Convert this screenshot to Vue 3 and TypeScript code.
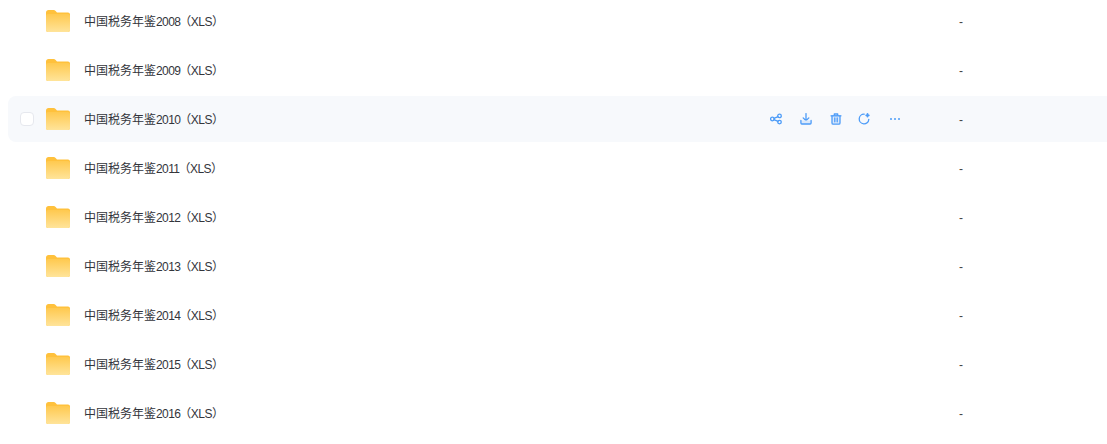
<script setup lang="ts">
const years = [2008, 2009, 2010, 2011, 2012, 2013, 2014, 2015, 2016]
const activeYear = 2010
</script>

<template>
  <div class="page">
    <div class="list">
      <div v-for="year in years" :key="year" class="row" :class="{ 'is-active': year === activeYear }">
        <span class="check"></span>
        <svg class="folder" viewBox="0 0 24 22" xmlns="http://www.w3.org/2000/svg">
          <defs>
            <linearGradient :id="`folder-${year}`" x1="0" y1="0" x2="0" y2="1">
              <stop offset="0" stop-color="#ffc94f" />
              <stop offset="1" stop-color="#ffe49a" />
            </linearGradient>
          </defs>
          <path d="M0 2.5C0 1.1 1.1 0 2.5 0H7.6C8.4 0 9.1.3 9.6.9L11 2.5H22C23.1 2.5 24 3.4 24 4.5V20C24 21.1 23.1 22 22 22H2C.9 22 0 21.1 0 20Z" fill="#ffc13c" />
          <path d="M0 6C0 4.9.9 4 2 4H22C23.1 4 24 4.9 24 6V20C24 21.1 23.1 22 22 22H2C.9 22 0 21.1 0 20Z" :fill="`url(#folder-${year})`" />
        </svg>
        <span class="name">中国税务年鉴<span class="year">{{ year }}</span><span class="tag">（XLS）</span></span>

        <div class="actions">
          <template v-if="year === activeYear">
            <svg viewBox="0 0 12 12" xmlns="http://www.w3.org/2000/svg">
              <circle cx="2.4" cy="6" r="1.8" />
              <circle cx="9.5" cy="2.9" r="1.8" />
              <circle cx="9.5" cy="9.1" r="1.8" />
              <path d="M4 5.3 8 3.6M4 6.7 8 8.4" />
            </svg>
            <svg viewBox="0 0 12 12" xmlns="http://www.w3.org/2000/svg">
              <path d="M6 .6V7.5M3.2 4.9 6 7.7 8.8 4.9" />
              <path class="soft" d="M.9 7.5V10A1 1 0 0 0 1.9 11H10.1A1 1 0 0 0 11.1 10V7.5" />
            </svg>
            <svg viewBox="0 0 12 12" xmlns="http://www.w3.org/2000/svg">
              <path d="M1 2.8H11M4.3 2.6V1H7.7V2.6" />
              <path class="soft" d="M2 2.8V10A1.2 1.2 0 0 0 3.2 11.2H8.800A1.200 1.200 0 0 0 10 10V2.800Z" />
              <path d="M4.800 5V8.800M7.200 5V8.800" />
            </svg>
            <svg class="refresh" viewBox="0 0 12 12" xmlns="http://www.w3.org/2000/svg">
              <path d="M6.200 1.200A4.800 4.800 0 1 0 10.800 6.400" />
              <path class="plus" d="M9.500 1V3.600M8.200 2.300H10.800" />
            </svg>
            <svg viewBox="0 0 12 12" xmlns="http://www.w3.org/2000/svg" class="more">
              <circle cx="2" cy="6" r="1" />
              <circle cx="6" cy="6" r="1" />
              <circle cx="10" cy="6" r="1" />
            </svg>
          </template>
        </div>

        <span class="size">-</span>
      </div>
    </div>
  </div>
</template>

<style>
html,
body {
  margin: 0;
  background: #fff;
}
</style>

<style scoped>
.page {
  height: 444px;
  overflow: hidden;
  padding-left: 8px;
  font-family: "Liberation Sans", "Noto Sans CJK SC", sans-serif;
}

.list {
  display: flex;
  flex-direction: column;
  gap: 3px;
  margin-top: -2px;
}

.row {
  display: flex;
  align-items: center;
  height: 46px;
  padding-left: 12px;
  border-radius: 8px 0 0 8px;
  color: #33353b;
  font-size: 12px;
  flex-shrink: 0;
}

.row.is-active {
  background: #f7f9fc;
}

.check {
  width: 14px;
  height: 14px;
  box-sizing: border-box;
  margin-right: 12px;
  border-radius: 4px;
}

.is-active .check {
  background: #fff;
  border: 1.5px solid #e6e8ee;
}

.folder {
  width: 24px;
  height: 22px;
  margin-right: 14px;
  flex-shrink: 0;
}

.name {
  width: 686px;
  white-space: nowrap;
  line-height: 16px;
  margin-top: 2px;
}

.year {
  letter-spacing: -0.6px;
}

.tag {
  margin-left: -1px;
  letter-spacing: -0.5px;
}

.actions {
  display: flex;
  gap: 18px;
  width: 189px;
  margin-top: -1px;
}

.actions svg {
  width: 12px;
  height: 12px;
  fill: none;
  stroke: #4d9cf8;
  stroke-width: 1.3;
  stroke-linecap: round;
  stroke-linejoin: round;
}

.actions .soft {
  fill: #dbe9fb;
}

.actions .plus {
  stroke-width: 1.8;
}

.actions .refresh {
  margin-left: -2px;
  margin-right: 2px;
}

.actions .more {
  fill: #4d9cf8;
  stroke: none;
  margin-left: -1px;
}

.size {
  margin-top: 2px;
  color: #444;
  line-height: 16px;
}
</style>
